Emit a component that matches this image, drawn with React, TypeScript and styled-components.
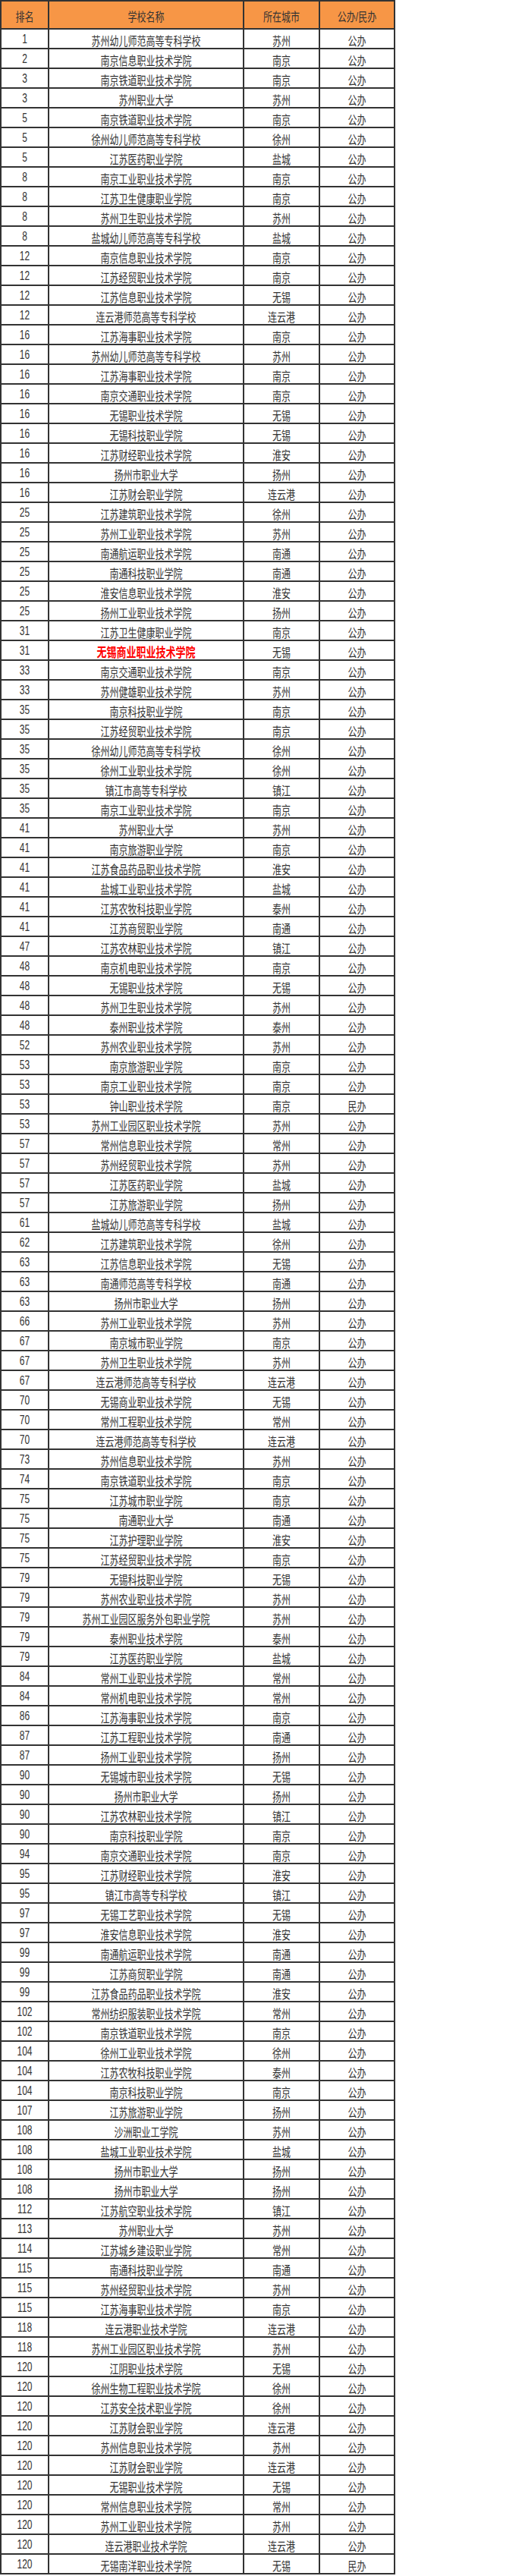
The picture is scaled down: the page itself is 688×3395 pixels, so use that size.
import React from "react";
import styled, { createGlobalStyle } from "styled-components";

type Row = [string, string, string, string?];

const rows: Row[] = [
  ["1", "苏州幼儿师范高等专科学校", "苏州"],
  ["2", "南京信息职业技术学院", "南京"],
  ["3", "南京铁道职业技术学院", "南京"],
  ["3", "苏州职业大学", "苏州"],
  ["5", "南京铁道职业技术学院", "南京"],
  ["5", "徐州幼儿师范高等专科学校", "徐州"],
  ["5", "江苏医药职业学院", "盐城"],
  ["8", "南京工业职业技术学院", "南京"],
  ["8", "江苏卫生健康职业学院", "南京"],
  ["8", "苏州卫生职业技术学院", "苏州"],
  ["8", "盐城幼儿师范高等专科学校", "盐城"],
  ["12", "南京信息职业技术学院", "南京"],
  ["12", "江苏经贸职业技术学院", "南京"],
  ["12", "江苏信息职业技术学院", "无锡"],
  ["12", "连云港师范高等专科学校", "连云港"],
  ["16", "江苏海事职业技术学院", "南京"],
  ["16", "苏州幼儿师范高等专科学校", "苏州"],
  ["16", "江苏海事职业技术学院", "南京"],
  ["16", "南京交通职业技术学院", "南京"],
  ["16", "无锡职业技术学院", "无锡"],
  ["16", "无锡科技职业学院", "无锡"],
  ["16", "江苏财经职业技术学院", "淮安"],
  ["16", "扬州市职业大学", "扬州"],
  ["16", "江苏财会职业学院", "连云港"],
  ["25", "江苏建筑职业技术学院", "徐州"],
  ["25", "苏州工业职业技术学院", "苏州"],
  ["25", "南通航运职业技术学院", "南通"],
  ["25", "南通科技职业学院", "南通"],
  ["25", "淮安信息职业技术学院", "淮安"],
  ["25", "扬州工业职业技术学院", "扬州"],
  ["31", "江苏卫生健康职业学院", "南京"],
  ["31", "无锡商业职业技术学院", "无锡"],
  ["33", "南京交通职业技术学院", "南京"],
  ["33", "苏州健雄职业技术学院", "苏州"],
  ["35", "南京科技职业学院", "南京"],
  ["35", "江苏经贸职业技术学院", "南京"],
  ["35", "徐州幼儿师范高等专科学校", "徐州"],
  ["35", "徐州工业职业技术学院", "徐州"],
  ["35", "镇江市高等专科学校", "镇江"],
  ["35", "南京工业职业技术学院", "南京"],
  ["41", "苏州职业大学", "苏州"],
  ["41", "南京旅游职业学院", "南京"],
  ["41", "江苏食品药品职业技术学院", "淮安"],
  ["41", "盐城工业职业技术学院", "盐城"],
  ["41", "江苏农牧科技职业学院", "泰州"],
  ["41", "江苏商贸职业学院", "南通"],
  ["47", "江苏农林职业技术学院", "镇江"],
  ["48", "南京机电职业技术学院", "南京"],
  ["48", "无锡职业技术学院", "无锡"],
  ["48", "苏州卫生职业技术学院", "苏州"],
  ["48", "泰州职业技术学院", "泰州"],
  ["52", "苏州农业职业技术学院", "苏州"],
  ["53", "南京旅游职业学院", "南京"],
  ["53", "南京工业职业技术学院", "南京"],
  ["53", "钟山职业技术学院", "南京", "民办"],
  ["53", "苏州工业园区职业技术学院", "苏州"],
  ["57", "常州信息职业技术学院", "常州"],
  ["57", "苏州经贸职业技术学院", "苏州"],
  ["57", "江苏医药职业学院", "盐城"],
  ["57", "江苏旅游职业学院", "扬州"],
  ["61", "盐城幼儿师范高等专科学校", "盐城"],
  ["62", "江苏建筑职业技术学院", "徐州"],
  ["63", "江苏信息职业技术学院", "无锡"],
  ["63", "南通师范高等专科学校", "南通"],
  ["63", "扬州市职业大学", "扬州"],
  ["66", "苏州工业职业技术学院", "苏州"],
  ["67", "南京城市职业学院", "南京"],
  ["67", "苏州卫生职业技术学院", "苏州"],
  ["67", "连云港师范高等专科学校", "连云港"],
  ["70", "无锡商业职业技术学院", "无锡"],
  ["70", "常州工程职业技术学院", "常州"],
  ["70", "连云港师范高等专科学校", "连云港"],
  ["73", "苏州信息职业技术学院", "苏州"],
  ["74", "南京铁道职业技术学院", "南京"],
  ["75", "江苏城市职业学院", "南京"],
  ["75", "南通职业大学", "南通"],
  ["75", "江苏护理职业学院", "淮安"],
  ["75", "江苏经贸职业技术学院", "南京"],
  ["79", "无锡科技职业学院", "无锡"],
  ["79", "苏州农业职业技术学院", "苏州"],
  ["79", "苏州工业园区服务外包职业学院", "苏州"],
  ["79", "泰州职业技术学院", "泰州"],
  ["79", "江苏医药职业学院", "盐城"],
  ["84", "常州工业职业技术学院", "常州"],
  ["84", "常州机电职业技术学院", "常州"],
  ["86", "江苏海事职业技术学院", "南京"],
  ["87", "江苏工程职业技术学院", "南通"],
  ["87", "扬州工业职业技术学院", "扬州"],
  ["90", "无锡城市职业技术学院", "无锡"],
  ["90", "扬州市职业大学", "扬州"],
  ["90", "江苏农林职业技术学院", "镇江"],
  ["90", "南京科技职业学院", "南京"],
  ["94", "南京交通职业技术学院", "南京"],
  ["95", "江苏财经职业技术学院", "淮安"],
  ["95", "镇江市高等专科学校", "镇江"],
  ["97", "无锡工艺职业技术学院", "无锡"],
  ["97", "淮安信息职业技术学院", "淮安"],
  ["99", "南通航运职业技术学院", "南通"],
  ["99", "江苏商贸职业学院", "南通"],
  ["99", "江苏食品药品职业技术学院", "淮安"],
  ["102", "常州纺织服装职业技术学院", "常州"],
  ["102", "南京铁道职业技术学院", "南京"],
  ["104", "徐州工业职业技术学院", "徐州"],
  ["104", "江苏农牧科技职业学院", "泰州"],
  ["104", "南京科技职业学院", "南京"],
  ["107", "江苏旅游职业学院", "扬州"],
  ["108", "沙洲职业工学院", "苏州"],
  ["108", "盐城工业职业技术学院", "盐城"],
  ["108", "扬州市职业大学", "扬州"],
  ["108", "扬州市职业大学", "扬州"],
  ["112", "江苏航空职业技术学院", "镇江"],
  ["113", "苏州职业大学", "苏州"],
  ["114", "江苏城乡建设职业学院", "常州"],
  ["115", "南通科技职业学院", "南通"],
  ["115", "苏州经贸职业技术学院", "苏州"],
  ["115", "江苏海事职业技术学院", "南京"],
  ["118", "连云港职业技术学院", "连云港"],
  ["118", "苏州工业园区职业技术学院", "苏州"],
  ["120", "江阴职业技术学院", "无锡"],
  ["120", "徐州生物工程职业技术学院", "徐州"],
  ["120", "江苏安全技术职业学院", "徐州"],
  ["120", "江苏财会职业学院", "连云港"],
  ["120", "苏州信息职业技术学院", "苏州"],
  ["120", "江苏财会职业学院", "连云港"],
  ["120", "无锡职业技术学院", "无锡"],
  ["120", "常州信息职业技术学院", "常州"],
  ["120", "苏州工业职业技术学院", "苏州"],
  ["120", "连云港职业技术学院", "连云港"],
  ["120", "无锡南洋职业技术学院", "无锡", "民办"],
];

const headers = ["排名", "学校名称", "所在城市", "公办/民办"];

// the one school marked in red in the list
const HIGHLIGHT_INDEX = 31;

const GlobalStyle = createGlobalStyle`
  html, body {
    margin: 0;
    padding: 0;
    background: #fff;
  }
`;

const Table = styled.div`
  display: grid;
  grid-template-columns: 63px 257px 100px 99px;
  width: 521px;
  box-sizing: border-box;
  border-top: 2px solid #333;
  border-left: 2px solid #333;
  font-family: "Liberation Sans", "Noto Sans CJK SC", sans-serif;
  font-size: 12px;
  color: #333;
`;

const HeadCell = styled.div`
  height: 37px;
  box-sizing: border-box;
  border-right: 2px solid #333;
  border-bottom: 2px solid #333;
  background: #f79646;
  display: flex;
  align-items: center;
  justify-content: center;
  padding-top: 1px;
`;

const Cell = styled.div`
  height: 26px;
  box-sizing: border-box;
  border-right: 2px solid #333;
  border-bottom: 2px solid #333;
  display: flex;
  align-items: center;
  justify-content: center;
  padding-top: 2px;
`;

// the source picture is stretched vertically, so the glyphs are too
const CellText = styled.span<{ $hot?: boolean }>`
  display: inline-block;
  white-space: nowrap;
  transform: scaleY(1.35);
  color: ${(p) => (p.$hot ? "#ff0000" : "inherit")};
  font-weight: ${(p) => (p.$hot ? 700 : 400)};
  font-size: ${(p) => (p.$hot ? "13px" : "12px")};
`;

export default function App() {
  return (
    <>
      <GlobalStyle />
      <Table>
        {headers.map((h) => (
          <HeadCell key={h}>
            <CellText>{h}</CellText>
          </HeadCell>
        ))}
        {rows.map(([rank, name, city, kind], i) => (
          <React.Fragment key={i}>
            <Cell>
              <CellText>{rank}</CellText>
            </Cell>
            <Cell>
              <CellText $hot={i === HIGHLIGHT_INDEX}>{name}</CellText>
            </Cell>
            <Cell>
              <CellText>{city}</CellText>
            </Cell>
            <Cell>
              <CellText>{kind ?? "公办"}</CellText>
            </Cell>
          </React.Fragment>
        ))}
      </Table>
    </>
  );
}
